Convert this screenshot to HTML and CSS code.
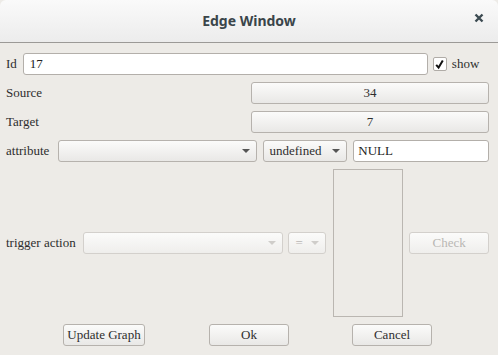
FILE: index.html
```html
<!DOCTYPE html>
<html>
<head>
<meta charset="utf-8">
<link rel="stylesheet" href="styles.css">
</head>
<body>
<div class="window">
  <header class="titlebar">
    <span class="title">Edge Window</span>
    <svg class="close" width="10" height="10" viewBox="0 0 10 10"><path d="M1.5 1.5 L8.5 8.5 M8.5 1.5 L1.5 8.5" stroke="#3d4b52" stroke-width="2.4" stroke-linecap="butt"/></svg>
  </header>
  <main class="content">
    <div class="row">
      <span class="label">Id</span>
      <div class="entry id-entry">17</div>
      <span class="check"><svg width="11" height="11" viewBox="0 0 11 11"><path d="M2.2 5.8 L4.6 8.6 L8.8 1.5" fill="none" stroke="#111" stroke-width="2"/></svg></span>
      <span class="check-label">show</span>
    </div>
    <div class="row">
      <span class="label grow">Source</span>
      <div class="btn wide">34</div>
    </div>
    <div class="row">
      <span class="label grow">Target</span>
      <div class="btn wide">7</div>
    </div>
    <div class="row">
      <span class="label attr-label">attribute</span>
      <div class="btn combo attr-combo"><span></span><i class="arrow"></i></div>
      <div class="btn combo type-combo"><span>undefined</span><i class="arrow"></i></div>
      <div class="entry null-entry">NULL</div>
    </div>
    <div class="row trigger-row">
      <span class="label trig-label">trigger action</span>
      <div class="btn combo disabled trig-combo"><span></span><i class="arrow"></i></div>
      <div class="btn combo disabled eq-combo"><span>=</span><i class="arrow"></i></div>
      <div class="listbox"></div>
      <div class="btn disabled check-btn">Check</div>
    </div>
    <div class="row footer">
      <div class="btn update">Update Graph</div>
      <div class="btn ok">Ok</div>
      <div class="btn cancel">Cancel</div>
    </div>
  </main>
</div>
</body>
</html>
```
FILE: styles.css
```css
html, body {
  margin: 0;
  padding: 0;
  background: #edebe7;
}
.window {
  width: 498px;
  height: 355px;
  background: #edebe7;
  font-family: "Liberation Serif", serif;
  font-size: 13px;
  color: #2e2e2e;
  display: flex;
  flex-direction: column;
  overflow: hidden;
}
.titlebar {
  height: 43px;
  flex: none;
  box-sizing: border-box;
  border-bottom: 1px solid #9c9a97;
  background: linear-gradient(#fafafa, #ececec);
  display: flex;
  align-items: center;
  justify-content: center;
  position: relative;
  border-radius: 6px 6px 0 0;
}
.title {
  font-family: "Noto Sans", sans-serif;
  font-weight: bold;
  font-size: 14px;
  color: #3a454a;
  margin-top: -1px;
}
.close {
  position: absolute;
  right: 14px;
  top: 13px;
}
.content {
  display: flex;
  flex-direction: column;
  gap: 7px;
  padding: 10px 9px 0 6px;
}
.row {
  display: flex;
  align-items: center;
  height: 22px;
}
.label {
  white-space: nowrap;
}
.grow { flex: 1; }
.entry {
  box-sizing: border-box;
  height: 22px;
  background: #fff;
  border: 1px solid #b3afaa;
  border-radius: 3px;
  padding: 0 6px;
  display: flex;
  align-items: center;
  color: #222;
}
.id-entry {
  width: 405px;
  margin-left: 6px;
}
.check {
  box-sizing: border-box;
  width: 14px;
  height: 14px;
  background: #fff;
  border: 1px solid #b0aca7;
  border-radius: 2px;
  margin-left: 5px;
  display: flex;
  align-items: center;
  justify-content: center;
}
.check-label {
  margin-left: 5px;
}
.btn {
  box-sizing: border-box;
  height: 22px;
  border: 1px solid #b6b2ad;
  border-radius: 3px;
  background: linear-gradient(#fbfbfa, #e9e8e6);
  display: flex;
  align-items: center;
  justify-content: center;
  color: #2e2e2e;
  white-space: nowrap;
}
.wide { width: 238px; }
.combo {
  justify-content: space-between;
  padding: 0 6px 0 5px;
}
.arrow {
  width: 0;
  height: 0;
  border-left: 4px solid transparent;
  border-right: 4px solid transparent;
  border-top: 4px solid #555;
}
.attr-label { width: 52px; }
.attr-combo { width: 200px; }
.type-combo { width: 84px; margin-left: 6px; }
.null-entry { width: 136px; margin-left: 6px; padding-left: 4px; }
.disabled {
  border-color: #d3d0cc;
  color: #b9b7b4;
  background: linear-gradient(#fbfbfa, #efeeec);
}
.disabled .arrow { border-top-color: #cfcdca; }
.trigger-row {
  height: 148px;
}
.trig-label { width: 77px; }
.trig-combo { width: 201px; }
.eq-combo { width: 38px; margin-left: 5px; padding: 0 6px 0 6px; }
.listbox {
  box-sizing: border-box;
  width: 70px;
  height: 148px;
  border: 1px solid #bab6b1;
  margin-left: 7px;
}
.check-btn { width: 80px; margin-left: 6px; }
.footer {
  padding-left: 57px;
}
.update { width: 82px; }
.ok { width: 80px; margin-left: 64px; }
.cancel { width: 80px; margin-left: 63px; }
```
